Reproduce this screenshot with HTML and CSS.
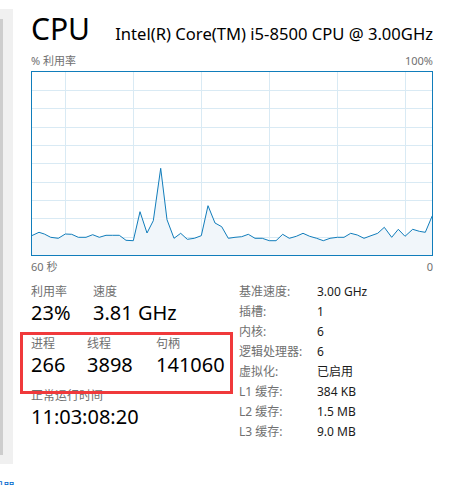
FILE: index.html
```html
<!DOCTYPE html>
<html lang="zh-CN">
<head>
<meta charset="UTF-8" />
<meta name="viewport" content="width=device-width, initial-scale=1" />
<title>CPU - 性能</title>
<link rel="stylesheet" href="styles.css">
</head>
<body>

  <div class="window">
    <aside class="side"><div class="side-thumb"></div></aside>

    <main class="perf">
      <header class="perf-head">
        <h1>CPU</h1>
        <span class="model">Intel(R) Core(TM) i5-8500 CPU @ 3.00GHz</span>
      </header>

      <div class="axis axis-top"><span>% 利用率</span><span>100%</span></div>

      <div class="chart">
        <svg width="400" height="183" viewBox="32 73 400 183">
          <g class="grid">
            <line x1="65.5" y1="73" x2="65.5" y2="256" />
            <line x1="133.5" y1="73" x2="133.5" y2="256" />
            <line x1="201.5" y1="73" x2="201.5" y2="256" />
            <line x1="269.5" y1="73" x2="269.5" y2="256" />
            <line x1="337.5" y1="73" x2="337.5" y2="256" />
            <line x1="405.5" y1="73" x2="405.5" y2="256" />
            <line x1="32" y1="91.5" x2="432" y2="91.5" />
            <line x1="32" y1="109.5" x2="432" y2="109.5" />
            <line x1="32" y1="128.5" x2="432" y2="128.5" />
            <line x1="32" y1="146.5" x2="432" y2="146.5" />
            <line x1="32" y1="164.5" x2="432" y2="164.5" />
            <line x1="32" y1="183.5" x2="432" y2="183.5" />
            <line x1="32" y1="201.5" x2="432" y2="201.5" />
            <line x1="32" y1="219.5" x2="432" y2="219.5" />
            <line x1="32" y1="238.5" x2="432" y2="238.5" />
          </g>
          <polygon class="area" id="cpuArea" points="" />
          <polyline class="line" id="cpuLine" points="" />
        </svg>
      </div>

      <div class="axis axis-bottom"><span>60 秒</span><span>0</span></div>

      <section class="stats">
        <div class="stats-main">
          <div class="stat-row row-usage">
            <div class="stat"><div class="label">利用率</div><div class="value">23%</div></div>
            <div class="stat"><div class="label">速度</div><div class="value">3.81 GHz</div></div>
          </div>
          <div class="stat-row row-counts">
            <div class="stat"><div class="label">进程</div><div class="value">266</div></div>
            <div class="stat"><div class="label">线程</div><div class="value">3898</div></div>
            <div class="stat"><div class="label">句柄</div><div class="value">141060</div></div>
          </div>
          <div class="stat-row">
            <div class="stat"><div class="label">正常运行时间</div><div class="value">11:03:08:20</div></div>
          </div>
          <div class="highlight"></div>
        </div>

        <dl class="specs">
          <dt>基准速度:</dt><dd>3.00 GHz</dd>
          <dt>插槽:</dt><dd>1</dd>
          <dt>内核:</dt><dd>6</dd>
          <dt>逻辑处理器:</dt><dd>6</dd>
          <dt>虚拟化:</dt><dd>已启用</dd>
          <dt>L1 缓存:</dt><dd>384 KB</dd>
          <dt>L2 缓存:</dt><dd>1.5 MB</dd>
          <dt>L3 缓存:</dt><dd>9.0 MB</dd>
        </dl>
      </section>
    </main>
  </div>

  <div class="foot-link"><span>打开资源监视器</span></div>

<script>
  // last 60 seconds of usage, already scaled to chart coordinates (x, y)
  const samples = [
    [31.7, 236.7], [39.0, 233.3], [44.3, 235.0], [50.7, 238.3], [58.3, 239.3],
    [65.3, 235.0], [71.7, 235.3], [78.3, 238.3], [86.0, 238.3], [92.7, 235.7],
    [99.3, 238.3], [106.0, 236.3], [112.7, 236.3], [119.3, 236.3], [126.0, 241.3],
    [133.3, 241.7], [140.0, 212.7], [147.0, 234.0], [153.3, 221.7], [160.7, 169.3],
    [167.0, 220.7], [174.0, 239.3], [180.7, 234.3], [187.3, 240.3], [194.3, 239.3],
    [201.3, 236.7], [208.0, 206.7], [215.0, 224.0], [221.7, 227.7], [228.3, 239.3],
    [235.0, 238.3], [241.7, 237.7], [248.3, 235.3], [255.0, 239.3], [262.3, 239.3],
    [269.3, 241.7], [276.0, 241.7], [282.7, 235.3], [289.3, 239.3], [296.3, 237.3],
    [303.0, 234.3], [309.7, 237.3], [316.7, 239.3], [323.3, 241.7], [330.0, 239.3],
    [337.3, 238.3], [344.0, 238.3], [350.7, 234.3], [357.3, 236.0], [364.0, 239.3],
    [371.0, 236.7], [377.7, 234.3], [384.3, 228.3], [391.7, 238.3], [398.3, 230.3],
    [405.0, 237.3], [412.7, 230.3], [419.3, 232.3], [425.3, 233.3], [432.3, 216.7]
  ];

  const pts = samples.map(p => p.join(',')).join(' ');
  document.getElementById('cpuLine').setAttribute('points', pts);
  document.getElementById('cpuArea').setAttribute('points', '31.7,256 ' + pts + ' 432.3,256');
</script>
</body>
</html>
```

FILE: styles.css
```css
body, html {
  margin: 0; padding: 0;
  background: #fff;
  color: #000;
  font-family: "Noto Sans", "Noto Sans CJK SC", sans-serif;
  overflow: hidden;
}

.window {
  display: flex;
  align-items: flex-start;
}

/* left navigation pane edge */
.side {
  width: 13px;
  height: 455px;
  margin-top: 9px;
  background: #f0f0f0;
  flex-shrink: 0;
}

.side-thumb {
  width: 3px;
  height: 436px;
  margin-top: 10px;
  background: #cdcdcd;
}

.perf {
  width: 402px;
  margin-left: 18px;
  padding-top: 11px;
}

.perf-head {
  display: flex;
  justify-content: space-between;
  align-items: baseline;
}

.perf-head h1 {
  margin: 0;
  font-size: 30px;
  line-height: 36px;
  font-weight: 400;
}

.model {
  font-size: 16.6px;
}

.axis {
  display: flex;
  justify-content: space-between;
  font-size: 11px;
  line-height: 15px;
  color: #707070;
}

.axis-top {
  margin-top: 6px;
  margin-bottom: 3px;
}

.axis-bottom {
  margin-top: 3px;
}

.chart {
  height: 183px;
  border: 1px solid #117dbb;
}

.chart svg {
  display: block;
}

.grid line {
  stroke: #d9eaf4;
  stroke-width: 1;
}

.area {
  fill: #f1f6fa;
}

.line {
  fill: none;
  stroke: #117dbb;
  stroke-width: 1;
  stroke-linejoin: round;
}

/* numbers under the graph */
.stats {
  display: flex;
  margin-top: 8px;
}

.stats-main {
  position: relative;
  width: 208px;
  padding-top: 2px;
}

.stat-row {
  display: grid;
  margin-bottom: 10px;
}

.row-usage { grid-template-columns: 62px auto; }
.row-counts { grid-template-columns: 56px 69px auto; }

.label {
  font-size: 12px;
  line-height: 16px;
  color: #707070;
}

.value {
  font-size: 20px;
  line-height: 26px;
  white-space: nowrap;
}

/* red outline drawn over the process counts */
.highlight {
  position: absolute;
  left: -11px;
  top: 50px;
  width: 207px;
  height: 56px;
  border: 3px solid #f0393b;
}

.specs {
  display: grid;
  grid-template-columns: 78px auto;
  margin: 0;
  font-size: 12px;
  line-height: 20px;
}

.specs dt {
  color: #707070;
}

.specs dd {
  margin: 0;
  color: #1a1a1a;
}

/* link below the pane, scrolled mostly out of view */
.foot-link {
  width: 15px;
  margin-top: 16px;
  display: flex;
  justify-content: flex-end;
  overflow: hidden;
  font-size: 12px;
  line-height: 16px;
  color: #0066cc;
  white-space: nowrap;
}
```
